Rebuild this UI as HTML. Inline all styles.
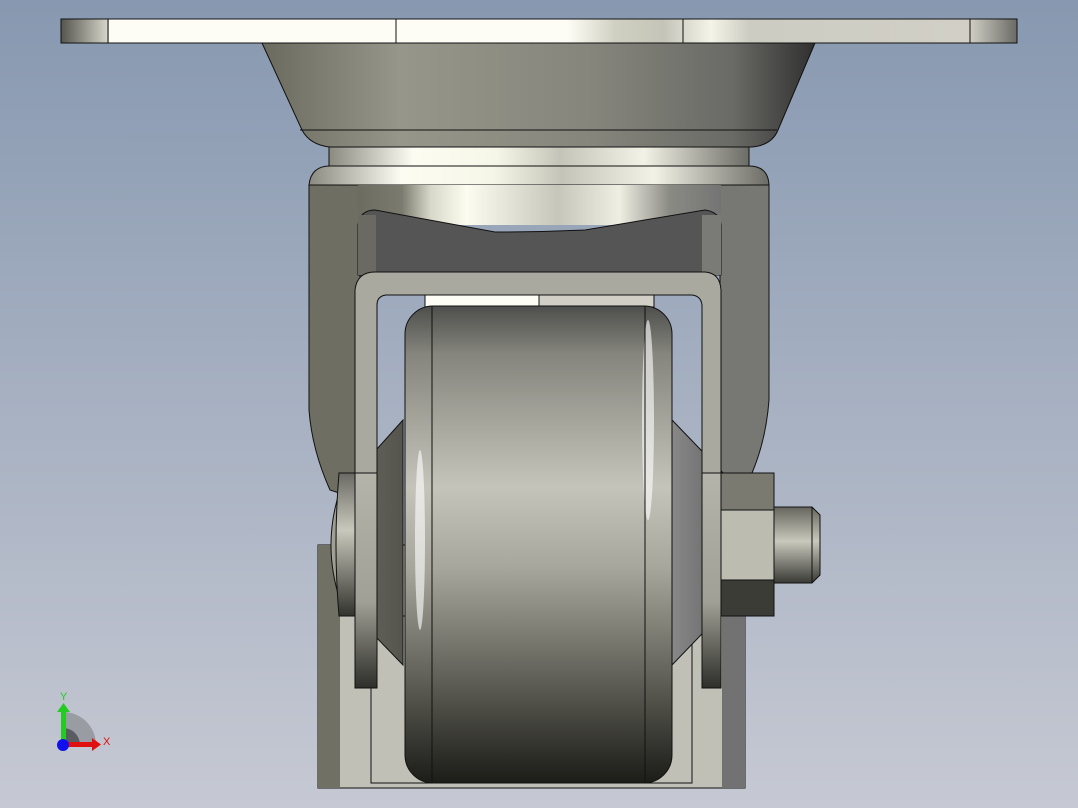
<!DOCTYPE html>
<html><head><style>html,body{margin:0;padding:0;width:1078px;height:808px;overflow:hidden}</style></head><body>
<svg width="1078" height="808" viewBox="0 0 1078 808" xmlns="http://www.w3.org/2000/svg">
<defs>
<linearGradient id="bg" x1="0" y1="0" x2="0" y2="1"><stop offset="0" stop-color="#8798b0"/><stop offset="1" stop-color="#c6c9d3"/></linearGradient>
<linearGradient id="plate" x1="0" x2="1"><stop offset="0" stop-color="#55554e"/><stop offset="0.05" stop-color="#d8d8cc"/><stop offset="0.05" stop-color="#fdfdf6"/><stop offset="0.53" stop-color="#fdfdf6"/><stop offset="0.58" stop-color="#d0d0c2"/><stop offset="0.63" stop-color="#c4c4b8"/><stop offset="0.68" stop-color="#f4f4e8"/><stop offset="0.72" stop-color="#ccccc2"/><stop offset="0.95" stop-color="#d2d0c6"/><stop offset="1" stop-color="#6a6a66"/></linearGradient>
<linearGradient id="cone" x1="0" x2="1"><stop offset="0" stop-color="#6a6a5e"/><stop offset="0.25" stop-color="#96968a"/><stop offset="0.6" stop-color="#85857c"/><stop offset="0.85" stop-color="#6a6a66"/><stop offset="1" stop-color="#303030"/></linearGradient>
<linearGradient id="ring" x1="0" x2="1"><stop offset="0" stop-color="#8a8a80"/><stop offset="0.2" stop-color="#fcfcf2"/><stop offset="0.4" stop-color="#f6f6e8"/><stop offset="0.55" stop-color="#c4c4b8"/><stop offset="0.75" stop-color="#f2f2e6"/><stop offset="1" stop-color="#6c6c66"/></linearGradient>
<linearGradient id="house" x1="0" x2="1"><stop offset="0" stop-color="#6c6c60"/><stop offset="0.12" stop-color="#7a7a6e"/><stop offset="0.2" stop-color="#d8d8ca"/><stop offset="0.3" stop-color="#fcfcf0"/><stop offset="0.55" stop-color="#c6c6ba"/><stop offset="0.72" stop-color="#eeeee2"/><stop offset="0.86" stop-color="#8a8a84"/><stop offset="1" stop-color="#747474"/></linearGradient>
<linearGradient id="wheel" x1="0" y1="0" x2="0" y2="1"><stop offset="0" stop-color="#4e4e4c"/><stop offset="0.1" stop-color="#85857d"/><stop offset="0.38" stop-color="#c4c4ba"/><stop offset="0.55" stop-color="#a6a69c"/><stop offset="0.8" stop-color="#5a5a52"/><stop offset="1" stop-color="#1c1c18"/></linearGradient>
<linearGradient id="hub" x1="0" x2="1"><stop offset="0" stop-color="#a8a89e"/><stop offset="0.3" stop-color="#66665c"/><stop offset="1" stop-color="#55554e"/></linearGradient>
<linearGradient id="hubr" x1="0" x2="1"><stop offset="0" stop-color="#888"/><stop offset="1" stop-color="#666"/></linearGradient>
<linearGradient id="cap" x1="0" y1="0" x2="0" y2="1"><stop offset="0" stop-color="#6a6a64"/><stop offset="0.4" stop-color="#c8c8bc"/><stop offset="1" stop-color="#33332e"/></linearGradient>
<linearGradient id="bolt" x1="0" y1="0" x2="0" y2="1"><stop offset="0" stop-color="#66665e"/><stop offset="0.45" stop-color="#c8c8bc"/><stop offset="1" stop-color="#3a3a36"/></linearGradient>
<linearGradient id="leg" x1="0" y1="0" x2="0" y2="1"><stop offset="0" stop-color="#b4b4aa"/><stop offset="0.6" stop-color="#a0a096"/><stop offset="1" stop-color="#2e2e2a"/></linearGradient>
</defs>
<rect width="1078" height="808" fill="url(#bg)"/>
<rect x="61" y="19" width="956" height="24" fill="url(#plate)" stroke="#111"/>
<line x1="108" y1="19" x2="108" y2="43" stroke="#111"/><line x1="396" y1="19" x2="396" y2="43" stroke="#111"/><line x1="683" y1="19" x2="683" y2="43" stroke="#111"/><line x1="970" y1="19" x2="970" y2="43" stroke="#111"/>
<path d="M262 43 L815 43 L778 130 Q772 145 752 147 L330 147 Q310 145 302 130 Z" fill="url(#cone)" stroke="#111"/>
<line x1="300" y1="130" x2="777" y2="130" stroke="#111"/>
<rect x="329" y="147" width="420" height="19" fill="url(#ring)" stroke="#111"/>
<!-- lower bracket -->
<rect x="318" y="545" width="427" height="243" fill="#c0c0b6" stroke="#111"/>
<rect x="318" y="545" width="22" height="243" fill="#707064"/>
<rect x="722" y="616" width="23" height="172" fill="#727272"/>
<rect x="371" y="616" width="321" height="167" fill="none" stroke="#111"/>
<!-- housing lobes -->
<path d="M309 185 L360 185 L360 500 L330 490 Q312 450 309 410 Z" fill="#6e6e62" stroke="#111"/>
<path d="M720 185 L769 185 L769 400 Q766 440 752 473 L720 473 Z" fill="#777774" stroke="#111"/>
<path d="M309 185 Q311 166 330 166 L749 166 Q768 166 769 185 Z" fill="url(#ring)" stroke="#111"/>
<rect x="358" y="185" width="363" height="40" fill="url(#house)"/>
<path d="M358 225 Q360 210 375 210 L495 232 Q540 232 585 230 L705 210 Q720 212 721 225 L721 275 L358 275 Z" fill="#555555" stroke="#111"/>
<rect x="358" y="215" width="18" height="60" fill="#6a6a62"/><rect x="702" y="215" width="19" height="60" fill="#7a7a76"/>
<rect x="425" y="295" width="114" height="12" fill="#fdfdf6" stroke="#111"/><rect x="539" y="295" width="115" height="12" fill="#d2d0c6" stroke="#111"/>
<!-- hub cones -->
<path d="M403 420 L340 490 Q322 545 340 600 L403 665 Z" fill="url(#hub)" stroke="#111"/>
<path d="M672 420 L725 475 L725 610 L672 665 Z" fill="url(#hubr)" stroke="#111"/>
<!-- wheel -->
<rect x="405" y="306" width="267" height="477" rx="28" fill="url(#wheel)" stroke="#111"/>
<ellipse cx="420" cy="540" rx="5" ry="90" fill="#fff" opacity="0.6"/>
<ellipse cx="648" cy="420" rx="6" ry="100" fill="#fff" opacity="0.6"/>
<line x1="432" y1="306" x2="432" y2="783" stroke="#111"/><line x1="645" y1="306" x2="645" y2="783" stroke="#111"/>
<!-- fork U -->
<path d="M355 290 Q357 272 375 272 L705 272 Q720 273 721 290 L721 688 L702 688 L702 305 Q701 296 692 295 L386 295 Q377 296 377 305 L377 688 L355 688 Z" fill="#a9a99f" stroke="#111"/>
<rect x="355" y="473" width="22" height="215" fill="url(#leg)" stroke="#111"/>
<rect x="702" y="473" width="19" height="215" fill="url(#leg)" stroke="#111"/>
<path d="M339 473 L355 473 L355 616 L339 616 Q333 545 339 473 Z" fill="url(#cap)" stroke="#111"/>
<rect x="721" y="473" width="53" height="37" fill="#7a7a70" stroke="#111"/>
<rect x="721" y="510" width="53" height="70" fill="#bcbcb0" stroke="#111"/>
<rect x="721" y="580" width="53" height="36" fill="#3c3c36" stroke="#111"/>
<path d="M774 507 L812 507 L820 515 L820 575 L812 583 L774 583 Z" fill="url(#bolt)" stroke="#111"/>
<line x1="812" y1="507" x2="812" y2="583" stroke="#111"/>
<path d="M63 745 L63 712 A33 33 0 0 1 96 745 Z" fill="#9a9ca4"/>
<path d="M63 745 L63 728 A17 17 0 0 1 80 745 Z" fill="#5a5c62"/>
<rect x="61" y="710" width="5" height="35" fill="#22cc22"/><path d="M57 712 L63.5 703 L70 712 Z" fill="#22cc22"/>
<rect x="63" y="742" width="30" height="5" fill="#e01010"/><path d="M92 738 L101 744.5 L92 751 Z" fill="#e01010"/>
<circle cx="63" cy="745" r="6" fill="#1010ee"/>
<text x="60" y="700" font-family="Liberation Sans, sans-serif" font-size="11" fill="#22cc22">Y</text>
<text x="103" y="745" font-family="Liberation Sans, sans-serif" font-size="11" fill="#e01010">X</text>
</svg>
</body></html>
